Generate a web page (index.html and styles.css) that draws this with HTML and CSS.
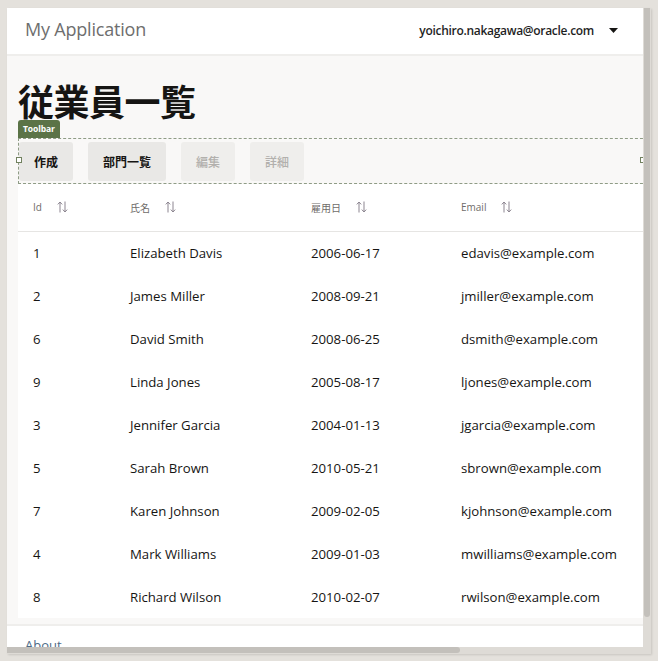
FILE: index.html
```html
<!DOCTYPE html>
<html lang="ja">
<head>
<meta charset="utf-8">
<title>従業員一覧</title>
<link rel="stylesheet" href="styles.css">
</head>
<body>
<div class="window">
  <div class="viewport">
    <header class="appbar">
      <div class="app-title">My Application</div>
      <div class="user">
        <span class="user-name">yoichiro.nakagawa@oracle.com</span>
        <svg class="caret" width="9" height="5" viewBox="0 0 9 5"><path d="M0 0H9L4.5 5Z" fill="#161513"/></svg>
      </div>
    </header>
    <main class="page">
      <h1 class="page-title">従業員一覧</h1>
      <div class="toolbar-wrap">
        <span class="tag">Toolbar</span>
        <div class="toolbar">
          <span class="handle handle-left"></span>
          <span class="handle handle-right"></span>
          <button class="btn">作成</button>
          <button class="btn">部門一覧</button>
          <button class="btn btn-disabled">編集</button>
          <button class="btn btn-disabled">詳細</button>
        </div>
      </div>
      <table class="grid">
        <colgroup>
          <col class="c-id"><col class="c-name"><col class="c-date"><col class="c-email">
        </colgroup>
        <thead>
          <tr>
            <th><span class="th-inner">Id<svg class="sort" width="11" height="12" viewBox="0 0 11 12"><path d="M3 11.5V1M0.8 3.4L3 1L5.2 3.4M8 0.5V11M5.8 8.6L8 11L10.2 8.6" fill="none" stroke="#8c8590" stroke-width="1"/></svg></span></th>
            <th><span class="th-inner">氏名<svg class="sort" width="11" height="12" viewBox="0 0 11 12"><path d="M3 11.5V1M0.8 3.4L3 1L5.2 3.4M8 0.5V11M5.8 8.6L8 11L10.2 8.6" fill="none" stroke="#8c8590" stroke-width="1"/></svg></span></th>
            <th><span class="th-inner">雇用日<svg class="sort" width="11" height="12" viewBox="0 0 11 12"><path d="M3 11.5V1M0.8 3.4L3 1L5.2 3.4M8 0.5V11M5.8 8.6L8 11L10.2 8.6" fill="none" stroke="#8c8590" stroke-width="1"/></svg></span></th>
            <th><span class="th-inner">Email<svg class="sort" width="11" height="12" viewBox="0 0 11 12"><path d="M3 11.5V1M0.8 3.4L3 1L5.2 3.4M8 0.5V11M5.8 8.6L8 11L10.2 8.6" fill="none" stroke="#8c8590" stroke-width="1"/></svg></span></th>
          </tr>
        </thead>
        <tbody>
          <tr><td>1</td><td>Elizabeth Davis</td><td>2006-06-17</td><td>edavis@example.com</td></tr>
          <tr><td>2</td><td>James Miller</td><td>2008-09-21</td><td>jmiller@example.com</td></tr>
          <tr><td>6</td><td>David Smith</td><td>2008-06-25</td><td>dsmith@example.com</td></tr>
          <tr><td>9</td><td>Linda Jones</td><td>2005-08-17</td><td>ljones@example.com</td></tr>
          <tr><td>3</td><td>Jennifer Garcia</td><td>2004-01-13</td><td>jgarcia@example.com</td></tr>
          <tr><td>5</td><td>Sarah Brown</td><td>2010-05-21</td><td>sbrown@example.com</td></tr>
          <tr><td>7</td><td>Karen Johnson</td><td>2009-02-05</td><td>kjohnson@example.com</td></tr>
          <tr><td>4</td><td>Mark Williams</td><td>2009-01-03</td><td>mwilliams@example.com</td></tr>
          <tr><td>8</td><td>Richard Wilson</td><td>2010-02-07</td><td>rwilson@example.com</td></tr>
        </tbody>
      </table>
    </main>
    <footer class="footer">
      <a class="about">About</a>
    </footer>
  </div>
  <div class="vscroll"><div class="vthumb"></div></div>
  <div class="hscroll"><div class="hthumb"></div></div>
  <div class="corner"></div>
</div>
</body>
</html>
```
FILE: styles.css
```css
* { box-sizing: border-box; }

html, body {
  margin: 0;
  padding: 0;
  background: #e4e1dc;
  font-family: "Open Sans", "Noto Sans CJK JP", sans-serif;
  color: #161513;
}

body {
  padding: 8px 0 0 7px;
  height: 661px;
  overflow: hidden;
}

.window {
  display: grid;
  grid-template-columns: 636px 8px;
  grid-template-rows: 639px 7px;
  width: 644px;
  height: 646px;
  box-shadow: 1px 1px 2px rgba(0,0,0,0.12);
}

.viewport {
  overflow: hidden;
  background: #ffffff;
  display: flex;
  flex-direction: column;
}

/* header */
.appbar {
  flex: 0 0 auto;
  height: 48px;
  display: flex;
  align-items: center;
  justify-content: space-between;
  padding: 0 25px 4px 18px;
  border-bottom: 2px solid #efeeec;
  background: #ffffff;
}

.app-title {
  font-size: 18px;
  color: #6e6e6e;
  letter-spacing: -0.2px;
}

.user {
  display: flex;
  align-items: center;
  gap: 15px;
  padding-top: 3px;
}

.user-name {
  font-size: 12px;
  font-weight: 600;
  color: #1f1f1f;
  letter-spacing: -0.3px;
}

.caret { display: block; }

/* page */
.page {
  flex: 0 0 auto;
  background: #f9f8f7;
  padding: 24px 0 6px 11px;
}

.page-title {
  margin: 0;
  font-family: "Noto Sans CJK JP", sans-serif;
  font-size: 36px;
  line-height: 40px;
  font-weight: 700;
  color: #161513;
  letter-spacing: -0.5px;
}

.toolbar-wrap {
  display: flex;
  flex-direction: column;
  align-items: flex-start;
}

.tag {
  display: block;
  height: 18px;
  line-height: 18px;
  padding: 0 5px;
  font-size: 8.5px;
  font-weight: 700;
  color: #ffffff;
  background: #5b7347;
  border-radius: 3px 3px 0 0;
  letter-spacing: -0.1px;
}

.toolbar {
  position: relative;
  width: 640px;
  display: flex;
  gap: 15px;
  padding: 3px 0 2px 0;
  border: 1px dashed #8f9c86;
}

.handle {
  position: absolute;
  top: 18px;
  width: 6px;
  height: 6px;
  background: #ffffff;
  border: 1px solid #71815f;
}
.handle-left { left: -3px; }
.handle-right { left: 621px; }

.btn {
  height: 39px;
  padding: 0 15px;
  border: none;
  border-radius: 3px;
  background: #e9e8e6;
  font-family: "Noto Sans CJK JP", sans-serif;
  font-size: 12px;
  font-weight: 700;
  color: #161513;
}

.btn-disabled {
  background: #efeeec;
  color: #b2b0ad;
  font-weight: 500;
}

/* table */
.grid {
  border-collapse: collapse;
  table-layout: fixed;
  width: 660px;
  background: #ffffff;
}

.c-id { width: 97px; }
.c-name { width: 181px; }
.c-date { width: 150px; }
.c-email { width: 232px; }

.grid th {
  height: 47px;
  padding: 0 0 0 15px;
  text-align: left;
  font-weight: 400;
  font-size: 10px;
  color: #6f6c6a;
  border-bottom: 1px solid #e6e5e3;
  vertical-align: middle;
}

.th-inner {
  display: inline-flex;
  align-items: center;
  gap: 15px;
}

.sort { display: block; }

.grid td {
  height: 43px;
  padding: 1px 0 0 15px;
  font-size: 13.2px;
  color: #161513;
  white-space: nowrap;
  vertical-align: middle;
}

/* footer */
.footer {
  flex: 1 1 auto;
  border-top: 2px solid #efeeec;
  background: #ffffff;
  padding: 7px 18px 0;
}

.about {
  font-size: 13px;
  color: #4d6a86;
  text-decoration: none;
}

/* scrollbars */
.vscroll {
  background: #dedbd6;
  padding: 0 1px 0 1px;
}
.vthumb {
  height: 609px;
  background: #c3c0bb;
  border-radius: 0 0 3px 3px;
}

.hscroll {
  background: #dedbd6;
}
.hthumb {
  width: 453px;
  height: 6px;
  background: #c3c0bb;
  border-radius: 0 3px 3px 0;
}

.corner { background: #dedbd6; }
```
